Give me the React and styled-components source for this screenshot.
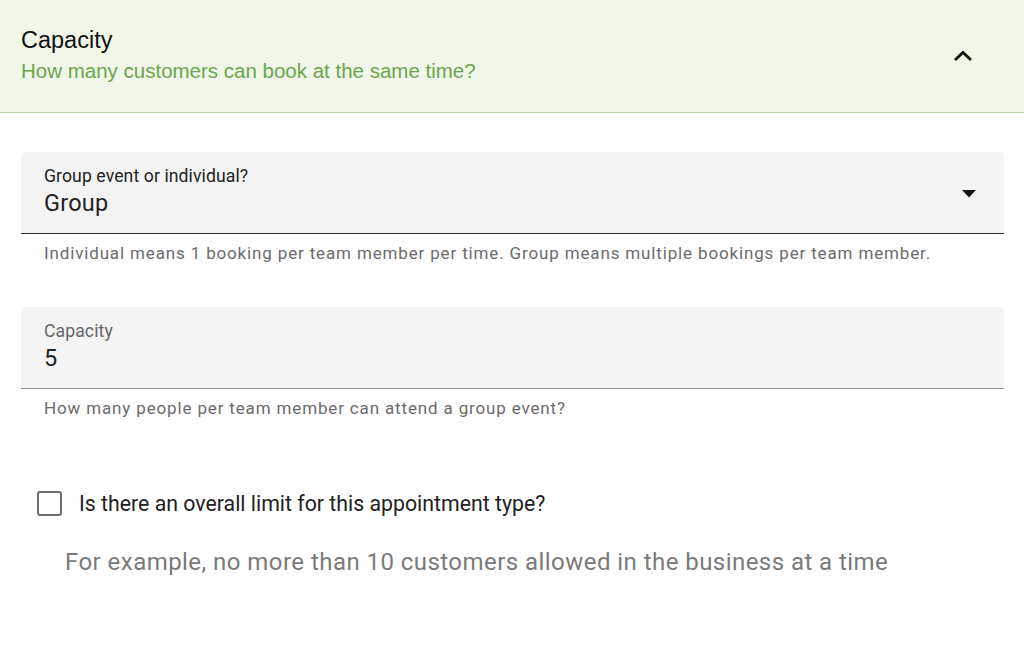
import React from "react";
import styled, { createGlobalStyle } from "styled-components";

const Global = createGlobalStyle`
  html, body { margin: 0; padding: 0; background: #fff; }
  body { font-family: Roboto, "Liberation Sans", sans-serif; }
`;

const Page = styled.div`
  width: 1024px;
  height: 649px;
  overflow: hidden;
  background: #fff;
`;

const Header = styled.div`
  display: flex;
  align-items: center;
  justify-content: space-between;
  height: 113px;
  box-sizing: border-box;
  padding: 0 51px 0 21px;
  background: #f0f7e9;
  border-bottom: 1.5px solid #b9dba3;
`;

const HeaderText = styled.div`
  display: flex;
  flex-direction: column;
  gap: 5px;
  font-family: "Liberation Sans", Arial, sans-serif;
  padding-bottom: 2px;
`;

const Title = styled.div`
  font-size: 23.5px;
  color: #111;
`;

const Subtitle = styled.div`
  font-size: 20.5px;
  color: #6ba54d;
`;

const Body = styled.div`
  display: flex;
  flex-direction: column;
  padding: 39px 20px 0 21px;
`;

const FieldGroup = styled.div`
  display: flex;
  flex-direction: column;
  margin-bottom: ${(p) => p.$mb}px;
`;

const Field = styled.div`
  display: flex;
  align-items: center;
  justify-content: space-between;
  height: 82px;
  box-sizing: border-box;
  padding: 0 28px 0 23px;
  background: #f4f4f4;
  border-radius: 5px 5px 0 0;
  border-bottom: ${(p) => (p.$dark ? "1.5px solid #333" : "1.5px solid #8f8f8f")};
`;

const FieldText = styled.div`
  display: flex;
  flex-direction: column;
  gap: 3px;
  padding-bottom: 2px;
`;

const Label = styled.div`
  font-size: 17.6px;
  color: ${(p) => (p.$dark ? "#222" : "#666")};
  letter-spacing: 0.1px;
`;

const Value = styled.div`
  font-size: 23.5px;
  color: #222;
  letter-spacing: 0.2px;
`;

const Helper = styled.div`
  padding: 9px 0 0 23px;
  font-size: 17px;
  color: #6b6b6b;
  letter-spacing: 0.85px;
`;

const CheckRow = styled.label`
  display: flex;
  align-items: center;
  gap: 17px;
  padding-left: 16px;
  margin-top: 3px;
`;

const Box = styled.span`
  width: 21px;
  height: 21px;
  border: 2.5px solid #6e6e6e;
  border-radius: 3px;
`;

const CheckLabel = styled.span`
  font-size: 21.3px;
  color: #222;
`;

const Example = styled.div`
  padding: 32px 0 0 44px;
  font-size: 24px;
  color: #7a7a7a;
  letter-spacing: 0.45px;
`;

export default function App() {
  return (
    <Page>
      <Global />
      <Header>
        <HeaderText>
          <Title>Capacity</Title>
          <Subtitle>How many customers can book at the same time?</Subtitle>
        </HeaderText>
        <svg width="20" height="14" viewBox="0 0 20 14">
          <path d="M2 11 L10 3.5 L18 11" fill="none" stroke="#111" strokeWidth="2.8" />
        </svg>
      </Header>
      <Body>
        <FieldGroup $mb={44}>
          <Field $dark>
            <FieldText>
              <Label $dark>Group event or individual?</Label>
              <Value>Group</Value>
            </FieldText>
            <svg width="14" height="8" viewBox="0 0 14 8" style={{ marginTop: 3 }}>
              <path d="M0 0 L14 0 L7 7.5 Z" fill="#111" />
            </svg>
          </Field>
          <Helper>
            Individual means 1 booking per team member per time. Group means multiple bookings per team member.
          </Helper>
        </FieldGroup>
        <FieldGroup $mb={70}>
          <Field>
            <FieldText>
              <Label>Capacity</Label>
              <Value>5</Value>
            </FieldText>
          </Field>
          <Helper>How many people per team member can attend a group event?</Helper>
        </FieldGroup>
        <CheckRow>
          <Box />
          <CheckLabel>Is there an overall limit for this appointment type?</CheckLabel>
        </CheckRow>
        <Example>For example, no more than 10 customers allowed in the business at a time</Example>
      </Body>
    </Page>
  );
}
